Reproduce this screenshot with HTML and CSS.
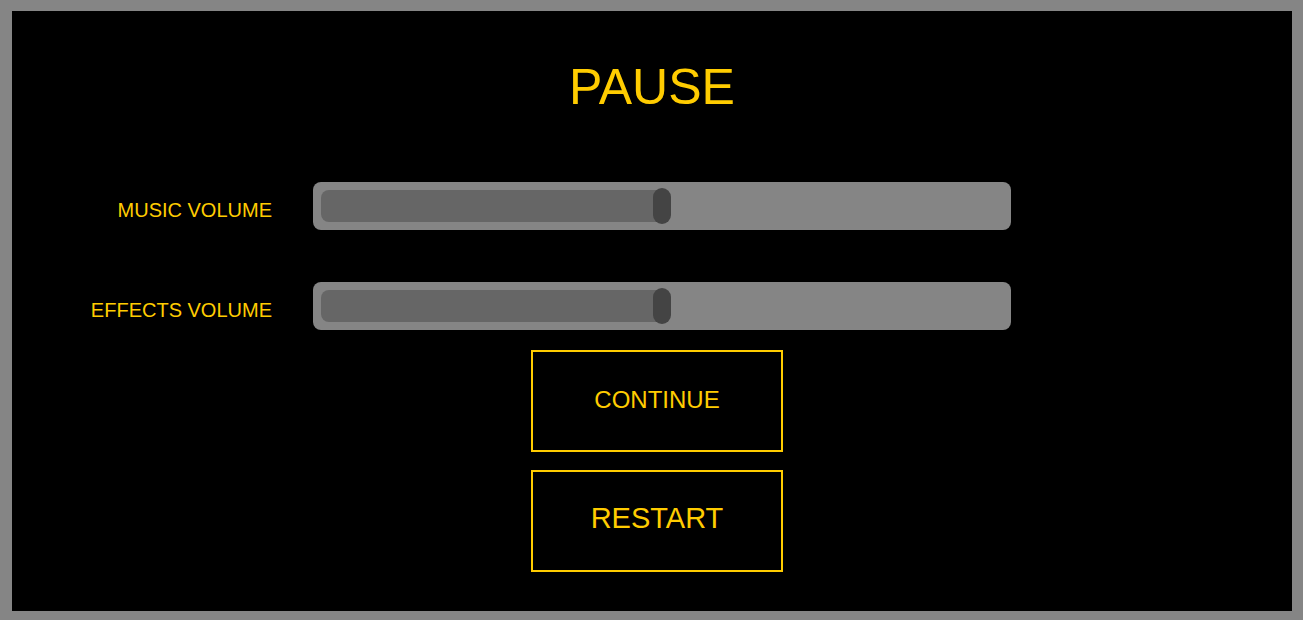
FILE: index.html
```html
<!DOCTYPE html>
<html>
<head>
<meta charset="utf-8">
<link rel="stylesheet" href="styles.css">
</head>
<body>
<div class="screen">
  <h1 class="title">PAUSE</h1>
  <div class="settings">
    <div class="label">MUSIC VOLUME</div>
    <div class="track">
      <div class="fill" style="width: 341px"></div>
      <div class="thumb" style="left: 340px"></div>
    </div>
    <div class="label">EFFECTS VOLUME</div>
    <div class="track">
      <div class="fill" style="width: 341px"></div>
      <div class="thumb" style="left: 340px"></div>
    </div>
  </div>
  <div class="buttons">
    <button class="btn btn-continue">CONTINUE</button>
    <button class="btn btn-restart">RESTART</button>
  </div>
</div>
</body>
</html>
```

FILE: styles.css
```css
html, body {
  margin: 0;
  padding: 0;
  background: #858585;
  height: 620px;
  overflow: hidden;
}

.screen {
  margin: 11px 0 0 12px;
  width: 1280px;
  height: 600px;
  background: #000;
  box-sizing: border-box;
  padding-top: 48px;
  font-family: "Liberation Sans", Arial, sans-serif;
  color: #ffcc00;
  display: flex;
  flex-direction: column;
}

.title {
  margin: 0;
  font-size: 50px;
  font-weight: normal;
  line-height: 56px;
  text-align: center;
}

.settings {
  margin-top: 67px;
  display: grid;
  grid-template-columns: 260px 698px;
  column-gap: 41px;
  row-gap: 52px;
  grid-auto-rows: 48px;
}

.label {
  font-size: 20px;
  line-height: 23px;
  text-align: right;
  display: flex;
  align-items: center;
  justify-content: flex-end;
  padding-top: 8px;
}

.track {
  position: relative;
  background: #858585;
  border-radius: 8px;
  padding: 8px;
  box-sizing: border-box;
}

.fill {
  height: 32px;
  background: #666666;
  border-radius: 8px 0 0 8px;
}

.thumb {
  position: absolute;
  top: 6px;
  width: 18px;
  height: 36px;
  border-radius: 9px;
  background: #444444;
}

.buttons {
  margin-top: 20px;
  padding-left: 10px;
  display: flex;
  flex-direction: column;
  align-items: center;
  gap: 18px;
}

.btn {
  width: 252px;
  height: 102px;
  box-sizing: border-box;
  border: 2px solid #ffcc00;
  background: #000;
  color: #ffcc00;
  font-family: "Liberation Sans", Arial, sans-serif;
  margin: 0;
  cursor: pointer;
}

.btn-continue {
  font-size: 24px;
  padding: 0 0 2px 0;
}

.btn-restart {
  font-size: 29px;
  padding: 0 0 5px 0;
}
```
